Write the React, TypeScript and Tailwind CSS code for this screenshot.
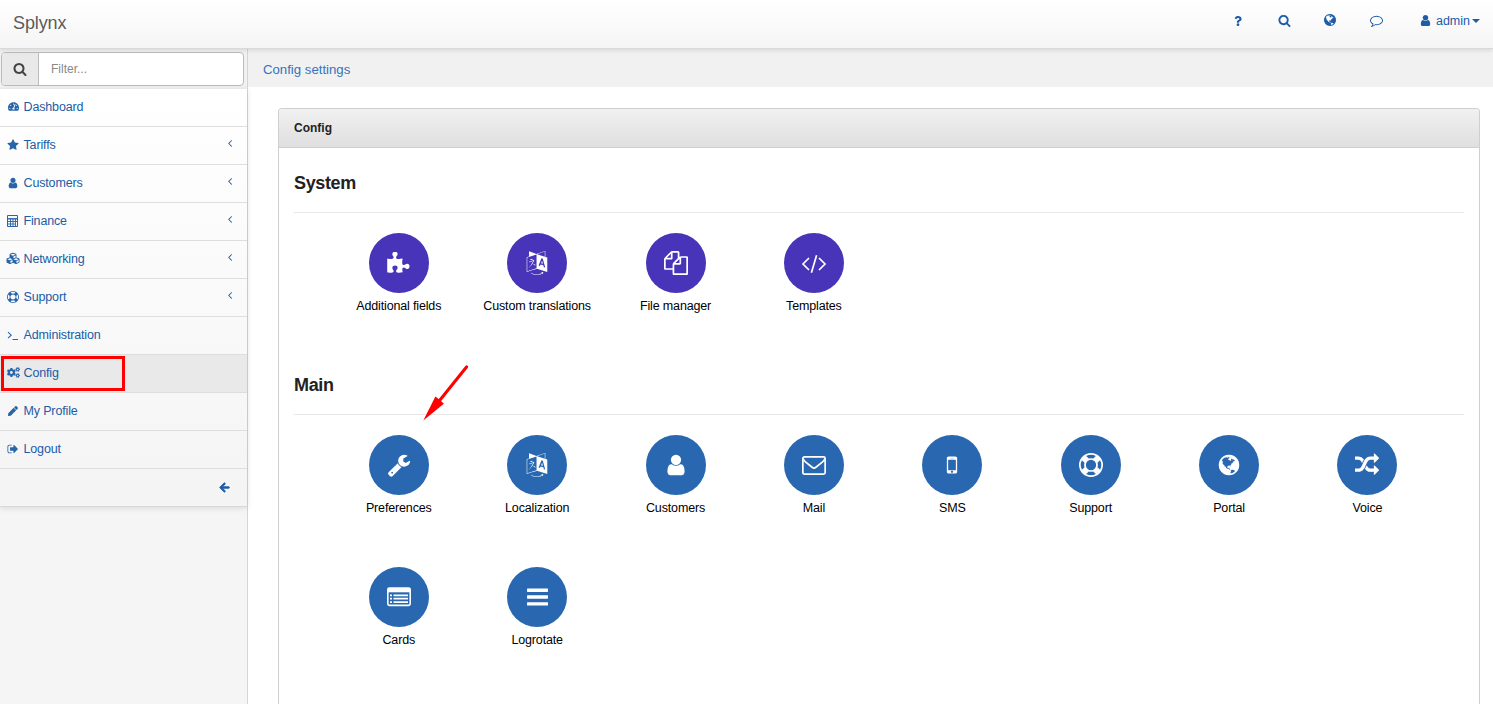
import React from "react";
import { FaArrowLeft, FaCogs, FaCubes, FaPen, FaQuestion, FaTachometerAlt } from "react-icons/fa";

const paths = {
  search:
    "M1216 832q0-185-131.5-316.5t-316.5-131.5-316.5 131.5-131.5 316.5 131.5 316.5 316.5 131.5 316.5-131.5 131.5-316.5zm512 832q0 52-38 90t-90 38q-54 0-90-38l-343-342q-179 124-399 124-143 0-273.5-55.5t-225-150-150-225-55.5-273.5 55.5-273.5 150-225 225-150 273.5-55.5 273.5 55.5 225 150 150 225 55.5 273.5q0 220-124 399l343 343q37 37 37 90z",
  user: "M1536 1399q0 109-62.5 187t-150.5 78h-854q-88 0-150.5-78t-62.5-187q0-85 8.5-160.5t31.5-152 58.5-131 94-89 134.5-34.5q131 128 313 128t313-128q76 0 134.5 34.5t94 89 58.5 131 31.5 152 8.5 160.5zm-256-887q0 159-112.5 271.5t-271.5 112.5-271.5-112.5-112.5-271.5 112.5-271.5 271.5-112.5 271.5 112.5 112.5 271.5z",
  star: "M1728 647q0 22-26 48l-363 354 86 500q1 7 1 20 0 21-10.5 35.5t-30.5 14.5q-19 0-40-12l-449-236-449 236q-22 12-40 12-21 0-31.5-14.5t-10.5-35.5q0-6 2-20l86-500-364-354q-25-27-25-48 0-37 56-46l502-73 225-455q19-41 49-41t49 41l225 455 502 73q56 9 56 46z",
  puzzle:
    "M1755 1079q0 81-44.5 135t-123.5 54q-41 0-77.5-17.5t-59-38-56.5-38-71-17.5q-110 0-110 124 0 39 16 115t15 115v5q-22 0-33 1-34 3-97.5 11.5t-115.5 13.5-98 5q-61 0-103-26.5t-42-83.5q0-37 17.5-71t38-56.5 38-59 17.5-77.5q0-79-54-123.5t-135-44.5q-84 0-143 45.5t-59 127.5q0 43 15 83t33.5 64.5 33.5 53 15 50.5q0 45-46 89-37 35-117 35-95 0-245-24-9-2-27.5-4t-27.5-4l-13-2q-1 0-3-1-2 0-2-1v-1024q2 1 17.5 3.5t34 5 21.5 3.5q150 24 245 24 80 0 117-35 46-44 46-89 0-22-15-50.5t-33.5-53-33.5-64.5-15-83q0-82 59-127.5t144-45.5q80 0 134 44.5t54 123.5q0 41-17.5 77.5t-38 59-38 56.5-17.5 71q0 57 42 83.5t103 26.5q64 0 180-15t163-17v2q-1 2-3.5 17.5t-5 34-3.5 21.5q-24 150-24 245 0 80 35 117 44 46 89 46 22 0 50.5-15t53-33.5 64.5-33.5 83-15q82 0 127.5 59t45.5 143z",
  wrench:
    "M448 1472q0-26-19-45t-45-19-45 19-19 45 19 45 45 19 45-19 19-45zm644-420l-682 682q-37 37-90 37-52 0-91-37l-106-108q-38-36-38-90 0-53 38-91l681-681q39 98 114.5 173.5t173.5 114.5zm634-435q0 39-23 106-47 134-164.5 217.5t-258.5 83.5q-185 0-316.5-131.5t-131.5-316.5 131.5-316.5 316.5-131.5q58 0 121.5 16.5t107.5 46.5q16 11 16 28t-16 28l-293 169v224l193 107q5-3 79-48.5t135.5-81 70.5-35.5q15 0 23.5 10t8.5 25z",
  files:
    "M1696 384q40 0 68 28t28 68v1216q0 40-28 68t-68 28h-960q-40 0-68-28t-28-68v-288h-544q-40 0-68-28t-28-68v-672q0-40 20-88t48-76l408-408q28-28 76-48t88-20h416q40 0 68 28t28 68v328q68-40 128-40h416zm-544 213l-299 299h299v-299zm-640-384l-299 299h299v-299zm196 647l316-316v-416h-384v416q0 40-28 68t-68 28h-416v640h512v-256q0-40 20-88t48-76zm956 804v-1152h-384v416q0 40-28 68t-68 28h-416v640h896z",
  random:
    "M666 481q-60 92-137 273-22-45-37-72.5t-40.5-63.5-51-56.5-63-35-81.5-14.5h-224q-14 0-23-9t-9-23v-192q0-14 9-23t23-9h224q250 0 410 225zm1126 799q0 14-9 23l-320 320q-9 9-23 9-13 0-22.5-9.5t-9.5-22.5v-192q-32 0-85 .5t-81 1-73-1-71-5-64-10.5-63-18.5-58-28.5-59-40-55-53.5-56-69.5q59-93 136-273 22 45 37 72.5t40.5 63.5 51 56.5 63 35 81.5 14.5h256v-192q0-14 9-23t23-9q12 0 24 10l319 319q9 9 9 23zm0-896q0 14-9 23l-320 320q-9 9-23 9-13 0-22.5-9.5t-9.5-22.5v-192h-256q-48 0-87 15t-69 45-51 61.5-45 77.5q-32 62-78 171-29 66-49.5 111t-54 105-64 100-74 83-90 68.5-106.5 42-128 16.5h-224q-14 0-23-9t-9-23v-192q0-14 9-23t23-9h224q48 0 87-15t69-45 51-61.5 45-77.5q32-62 78-171 29-66 49.5-111t54-105 64-100 74-83 90-68.5 106.5-42 128-16.5h256v-192q0-14 9-23t23-9q12 0 24 10l319 319q9 9 9 23z",
  ring: "M896 0q182 0 348 71t286 191 191 286 71 348-71 348-191 286-286 191-348 71-348-71-286-191-191-286-71-348 71-348 191-286 286-191 348-71zm0 128q-190 0-361 90l194 194q82-28 167-28t167 28l194-194q-171-90-361-90zm-678 1129l194-194q-28-82-28-167t28-167l-194-194q-90 171-90 361t90 361zm678 407q190 0 361-90l-194-194q-82 28-167 28t-167-28l-194 194q171 90 361 90zm0-384q159 0 271.5-112.5t112.5-271.5-112.5-271.5-271.5-112.5-271.5 112.5-112.5 271.5 112.5 271.5 271.5 112.5zm484-217l194 194q90-171 90-361t-90-361l-194 194q28 82 28 167t-28 167z",
  mobile:
    "M976 1408q0-33-23.5-56.5t-56.5-23.5-56.5 23.5-23.5 56.5 23.5 56.5 56.5 23.5 56.5-23.5 23.5-56.5zm208-160v-704q0-13-9.5-22.5t-22.5-9.5h-512q-13 0-22.5 9.5t-9.5 22.5v704q0 13 9.5 22.5t22.5 9.5h512q13 0 22.5-9.5t9.5-22.5zm-192-848q0-16-16-16h-160q-16 0-16 16t16 16h160q16 0 16-16zm288-16v1024q0 52-38 90t-90 38h-512q-52 0-90-38t-38-90v-1024q0-52 38-90t90-38h512q52 0 90 38t38 90z",
  comment:
    "M896 384q-204 0-381.5 69.5t-282 187.5-104.5 255q0 112 71.5 213.5t201.5 175.5l87 50-27 96q-24 91-70 172 152-63 275-171l43-38 57 6q69 8 130 8 204 0 381.5-69.5t282-187.5 104.5-255-104.5-255-282-187.5-381.5-69.5zm896 512q0 174-120 321.5t-326 233-450 85.5q-70 0-145-8-198 175-460 242-49 14-114 22h-5q-15 0-27-10.5t-16-27.5v-1q-3-4-.5-12t2-10 4.5-9.5l6-9 7-8.5 8-9q7-8 31-34.5t34.5-38 31-39.5 32.5-51 27-59 26-76q-157-89-247.5-220t-90.5-281q0-130 71-248.5t191-204.5 286-136.5 348-50.5 348 50.5 286 136.5 191 204.5 71 248.5z",
  signOut:
    "M704 1440q0 4 1 20t.5 26.5-3 23.5-10 19.5-20.5 6.5h-320q-119 0-203.5-84.5t-84.5-203.5v-704q0-119 84.5-203.5t203.5-84.5h320q13 0 22.5 9.5t9.5 22.5q0 4 1 20t.5 26.5-3 23.5-10 19.5-20.5 6.5h-320q-66 0-113 47t-47 113v704q0 66 47 113t113 47h312l11.5 1 11.5 3 8 5.5 7 9 2 13.5zm928-544q0 26-19 45l-544 544q-19 19-45 19t-45-19-19-45v-288h-448q-26 0-45-19t-19-45v-384q0-26 19-45t45-19h448v-288q0-26 19-45t45-19 45 19l544 544q19 19 19 45z",
  angleLeft:
    "M1203 544q0 13-10 23l-393 393 393 393q10 10 10 23t-10 23l-50 50q-10 10-23 10t-23-10l-466-466q-10-10-10-23t10-23l466-466q10-10 23-10t23 10l50 50q10 10 10 23z",
  language:
    "M782 1078q-1 3-12.5-.5t-31.5-11.5l-20-9q-44-20-87-49-7-5-41-31.5t-38-28.5q-67 103-134 181-81 95-105 110-4 2-19.5 4t-18.5 0q6-4 82-92 21-24 85.5-115t78.5-118q17-30 51-98.5t36-77.5q-8-1-110 33-8 2-27.5 7.5t-34.5 9.5-17 5q-2 2-2 10.5t-1 9.5q-5 10-31 15-23 7-47 0-18-4-28-21-4-6-5-23 6-2 24.5-5t29.5-6q58-16 105-32 100-35 102-35 10-2 43-19.5t44-21.5q9-3 21.5-8t14.5-5.5 6 .5q2 12-1 33 0 2-12.5 27t-26.5 53.5-17 33.5q-25 50-77 131l64 28q12 6 74.5 32t67.5 28q4 1 10.5 25.5t4.5 30.5zm-205-486q3 15-4 28-12 23-50 38-30 12-60 12-26-3-49-26-14-15-18-41l1-3q3 3 19.5 5t26.5 0 58-16q36-12 55-14 17 0 21 17zm698 129l63 227-139-42zm-1108 800l694-232v-1032l-694 233v1031zm1241-317l102 31-181-657-100-31-216 536 102 31 45-110 211 65zm-503-962l573 184v-380zm311 1323l158 13-54 160-40-66q-130 83-276 108-58 12-91 12h-84q-79 0-199.5-39t-183.5-85q-8-7-8-16 0-8 5-13.5t13-5.5q4 0 18 7.5t30.5 16.5 20.5 11q73 37 159.5 61.5t157.5 24.5q95 0 167-14.5t157-50.5q15-7 30.5-15.5t34-19 28.5-16.5zm448-1079v1079l-774-246q-14 6-375 127.5t-368 121.5q-13 0-18-13 0-1-1-3v-1078q3-9 4-10 5-6 20-11 107-36 149-50v-384l558 198q2 0 160.5-55t316-108.5 161.5-53.5q20 0 20 21v418z",
  globe:
    "M896 128q209 0 385.5 103t279.5 279.5 103 385.5-103 385.5-279.5 279.5-385.5 103-385.5-103-279.5-279.5-103-385.5 103-385.5 279.5-279.5 385.5-103zm274 521q-2 1-9.5 9.5t-13.5 9.5q2 0 4.5-5t5-11 3.5-7q6-7 22-15 14-6 52-12 34-8 51 11-2-2 9.5-13t14.5-12q3-2 15-4.5t15-7.5l2-22q-12 1-17.5-7t-6.5-21q0 2-6 8 0-7-4.5-8t-11.5 1-9 1q-10-3-15-7.5t-8-16.5-4-15q-2-5-9.5-11t-9.5-10q-1-2-2.5-5.5t-3-6.5-4-5.5-5.5-2.5-7 5-7.5 10-4.5 5q-3-2-6-1.5t-4.5 1-4.5 3-5 3.5q-3 2-8.5 3t-8.5 2q15-5-1-11-10-4-16-3 9-4 7.5-12t-8.5-14h5q-1-4-8.5-8.5t-17.5-8.5-13-6q-8-5-34-9.5t-33-.5q-5 6-4.5 10.5t4 14 3.5 12.5q1 6-5.5 13t-6.5 12q0 7 14 15.5t10 21.5q-3 8-16 16t-16 12q-5 8-1.5 18.5t10.5 16.5q2 2 1.5 4t-3.5 4.5-5.5 4-6.5 3.5l-3 2q-11 5-20.5-6t-13.5-26q-7-25-16-30-23-8-29 1-5-13-41-26-25-9-58-4 6-1 0-15-7-15-19-12 3-6 4-17.5t1-13.5q3-13 12-23 1-1 7-8.5t9.5-13.5.5-6q35 4 50-11 5-5 11.5-17t10.5-17q9-6 14-5.5t14.5 5.5 14.5 5q14 1 15.5-11t-7.5-20q12 1 3-17-4-7-8-9-12-4-27 5-8 4 2 8-1-1-9.5 10.5t-16.5 17.5-16-5q-1-1-5.5-13.5t-9.5-13.5q-8 0-16 15 3-8-11-15t-24-8q19-12-8-27-7-4-20.5-5t-19.5 4q-5 7-5.5 11.5t5 8 10.5 5.5 11.5 4 8.5 3q14 10 8 14-2 1-8.5 3.5t-11.5 4.5-6 4q-3 4 0 14t-2 14q-5-5-9-17.5t-7-16.5q7 9-25 6l-10-1q-4 0-16 2t-20.5 1-13.5-8q-4-8 0-20 1-4 4-2-4-3-11-9.5t-10-8.5q-46 15-94 41 6 1 12-1 5-2 13-6.5t10-5.5q34-14 42-7l5-5q14 16 20 25-7-4-30-1-20 6-22 12 7 12 5 18-4-3-11.5-10t-14.5-11-15-5q-16 0-22 1-146 80-235 222 7 7 12 8 4 1 5 9t2.5 11 11.5-3q9 8 3 19 1-1 44 27 19 17 21 21 3 11-10 18-1-2-9-9t-9-4q-3 5 .5 18.5t10.5 12.5q-7 0-9.5 16t-2.5 35.5-1 23.5l2 1q-3 12 5.5 34.5t21.5 19.5q-13 3 20 43 6 8 8 9 3 2 12 7.5t15 10 10 10.5q4 5 10 22.5t14 23.5q-2 6 9.5 20t10.5 23q-1 0-2.5 1t-2.5 1q3 7 15.5 14t15.5 13q1 3 2 10t3 11 8 2q2-20-24-62-15-25-17-29-3-5-5.5-15.5t-4.5-14.5q2 0 6 1.5t8.5 3.5 7.5 4 2 3q-3 7 2 17.5t12 18.5 17 19 12 13q6 6 14 19.5t0 13.5q9 0 20 10t17 20q5 8 8 26t5 24q2 7 8.5 13.5t12.5 9.5l16 8 13 7q5 2 18.5 10.5t21.5 11.5q10 4 16 4t14.5-2.5 13.5-3.5q15-2 29 15t21 21q36 19 55 11-2 1 .5 7.5t8 15.5 9 14.5 5.5 8.5q5 6 18 15t18 15q6-4 7-9-3 8 7 20t18 10q14-3 14-32-31 15-49-18 0-1-2.5-5.5t-4-8.5-2.5-8.5 0-7.5 5-3q9 0 10-3.5t-2-12.5-4-13q-1-8-11-20t-12-15q-5 9-16 8t-16-9q0 1-1.5 5.5t-1.5 6.5q-13 0-15-1 1-3 2.5-17.5t3.5-22.5q1-4 5.5-12t7.5-14.5 4-12.5-4.5-9.5-17.5-2.5q-19 1-26 20-1 3-3 10.5t-5 11.5-9 7q-7 3-24 2t-24-5q-13-8-22.5-29t-9.5-37q0-10 2.5-26.5t3-25-5.5-24.5q3-2 9-9.5t10-10.5q2-1 4.5-1.5t4.5 0 4-1.5 3-6q-1-1-4-3-3-3-4-3 7 3 28.5-1.5t27.5 1.5q15 11 22-2 0-1-2.5-9.5t-.5-13.5q5 27 29 9 3 3 15.5 5t17.5 5q3 2 7 5.5t5.5 4.5 5-.5 8.5-6.5q10 14 12 24 11 40 19 44 7 3 11 2t4.5-9.5 0-14-1.5-12.5l-1-8v-18l-1-8q-15-3-18.5-12t1.5-18.5 15-18.5q1-1 8-3.5t15.5-6.5 12.5-8q21-19 15-35 7 0 11-9-1 0-5-3t-7.5-5-4.5-2q9-5 2-16 5-3 7.5-11t7.5-10q9 12 21 2 8-8 1-16 5-7 20.5-10.5t18.5-9.5q7 2 8-2t1-12 3-12q4-5 15-9t13-5l17-11q3-4 0-4 18 2 31-11 10-11-6-20 3-6-3-9.5t-15-5.5q3-1 11.5-.5t10.5-1.5q15-10-7-16-17-5-43 12zm-163 877q206-36 351-189-3-3-12.5-4.5t-12.5-3.5q-18-7-24-8 1-7-2.5-13t-8-9-12.5-8-11-7q-2-2-7-6t-7-5.5-7.5-4.5-8.5-2-10 1l-3 1q-3 1-5.5 2.5t-5.5 3-4 3 0 2.5q-21-17-36-22-5-1-11-5.5t-10.5-7-10-1.5-11.5 7q-5 5-6 15t-2 13q-7-5 0-17.5t2-18.5q-3-6-10.5-4.5t-12 4.5-11.5 8.5-9 6.5-8.5 5.5-8.5 7.5q-3 4-6 12t-5 11q-2-4-11.5-6.5t-9.5-5.5q2 10 4 35t5 38q7 31-12 48-27 25-29 40-4 22 12 26 0 7-8 20.5t-7 21.5q0 6 2 16z",
};

type GlyphName = keyof typeof paths;

function Glyph({ name, className = "" }: { name: GlyphName; className?: string }) {
  return (
    <svg viewBox="0 0 1792 1792" fill="currentColor" className={`shrink-0 ${className}`}>
      <path d={paths[name]} />
    </svg>
  );
}

const Calculator = () => (
  <svg viewBox="0 0 11 12" className="mr-px h-3 w-[11px]" fill="none" stroke="currentColor">
    <path d="M.5 .5h10v11h-10z" />
    <path d="M1 3.8h9" strokeWidth="1.4" />
    <path d="M1 6.5h9M1 9h7M3.5 4v7.5M6 4v7.5M8.5 4v7.5" strokeWidth=".9" />
  </svg>
);

const Terminal = () => (
  <svg viewBox="0 0 12 10" className="mt-[3px] h-[10px] w-3" fill="none" stroke="currentColor">
    <path d="M1 1.2l3.2 3L1 7.2M5.5 8.5h5.5" strokeWidth="1.1" />
  </svg>
);

const Code = () => (
  <svg viewBox="0 0 26 24" className="mt-[2px] h-6 w-[26px]" fill="none" stroke="currentColor" strokeWidth="1.7">
    <path d="M8 6L2 12l6 6M18 6l6 6-6 6M15.6 3.2L10.4 20.8" />
  </svg>
);

const Envelope = () => (
  <svg viewBox="0 0 24 24" className="mt-[2px] h-6 w-6" fill="none" stroke="currentColor" strokeWidth="1.7">
    <rect x=".85" y="2.85" width="22.3" height="17.3" rx="1.6" />
    <path d="M1 4.6q1 2.2 3 3.8l5.8 4.6q1.4 1.2 2.2 1.2t2.2-1.2L20 8.4q2-1.6 3-3.8" />
  </svg>
);

const Cards = () => (
  <svg viewBox="0 0 24 24" className="h-6 w-6" fill="none" stroke="currentColor">
    <rect x=".8" y="3" width="22.4" height="17.4" rx="1.6" strokeWidth="1.6" />
    <path d="M.8 5.2h22.4" strokeWidth="4.2" />
    <path d="M3 10.3h2M6.5 10.3h14.5M3 13.7h2M6.5 13.7h14.5M3 17.1h2M6.5 17.1h14.5" strokeWidth="1.7" />
  </svg>
);

const Bars = () => (
  <svg viewBox="0 0 21 18" className="h-[18px] w-[21px]" fill="currentColor">
    <rect y=".5" width="21" height="3.4" rx=".6" />
    <rect y="7.3" width="21" height="3.4" rx=".6" />
    <rect y="14.2" width="21" height="3.4" rx=".6" />
  </svg>
);

const nav: { label: string; icon: React.ReactNode; sub?: boolean; active?: boolean }[] = [
  { label: "Dashboard", icon: <FaTachometerAlt className="h-[11px] w-[11px]" /> },
  { label: "Tariffs", icon: <Glyph name="star" className="h-3 w-3" />, sub: true },
  { label: "Customers", icon: <Glyph name="user" className="h-3 w-3" />, sub: true },
  { label: "Finance", icon: <Calculator />, sub: true },
  { label: "Networking", icon: <FaCubes className="h-[13px] w-[14px]" />, sub: true },
  { label: "Support", icon: <Glyph name="ring" className="h-3 w-3" />, sub: true },
  { label: "Administration", icon: <Terminal /> },
  { label: "Config", icon: <FaCogs className="h-[13px] w-[13px]" />, active: true },
  { label: "My Profile", icon: <FaPen className="h-[10px] w-[10px]" /> },
  { label: "Logout", icon: <Glyph name="signOut" className="h-3 w-3" /> },
];

const big = "h-6 w-6";
const systemTiles = [
  { label: "Additional fields", icon: <Glyph name="puzzle" className="mr-[2px] mt-px h-6 w-6" /> },
  { label: "Custom translations", icon: <Glyph name="language" className={big} /> },
  { label: "File manager", icon: <Glyph name="files" className={big} /> },
  { label: "Templates", icon: <Code /> },
];
const mainTiles = [
  { label: "Preferences", icon: <Glyph name="wrench" className={big} /> },
  { label: "Localization", icon: <Glyph name="language" className={big} /> },
  { label: "Customers", icon: <Glyph name="user" className={big} /> },
  { label: "Mail", icon: <Envelope /> },
  { label: "SMS", icon: <Glyph name="mobile" className={big} /> },
  { label: "Support", icon: <Glyph name="ring" className={big} /> },
  { label: "Portal", icon: <Glyph name="globe" className={big} /> },
  { label: "Voice", icon: <Glyph name="random" className={big} /> },
  { label: "Cards", icon: <Cards /> },
  { label: "Logrotate", icon: <Bars /> },
];

function Section({
  title,
  tiles,
  color,
}: {
  title: string;
  tiles: { label: string; icon: React.ReactNode }[];
  color: string;
}) {
  return (
    <section>
      <h3 className="h-5 text-[18px] leading-5 font-bold tracking-[-0.35px] text-[#222]">{title}</h3>
      <div className="mt-[19px] h-px bg-[#e8e8e8]" />
      <div className="mt-5 ml-[35.6px] grid w-[1107px] grid-cols-8">
        {tiles.map((t) => (
          <div key={t.label} className="flex h-[132px] flex-col items-center">
            <div className={`flex h-[60px] w-[60px] items-center justify-center rounded-full text-white ${color}`}>
              {t.icon}
            </div>
            <span className="mt-1 text-[12.5px] leading-[18px] tracking-[-0.15px] whitespace-nowrap text-black">
              {t.label}
            </span>
          </div>
        ))}
      </div>
    </section>
  );
}

export default function App() {
  return (
    <div className="flex h-[704px] flex-col overflow-hidden bg-white font-['Liberation_Sans',Arial,sans-serif] text-[12.5px] tracking-[-0.15px] text-[#205ca6]">
      <header className="relative z-10 flex h-[49px] shrink-0 justify-between border-b border-[#d9d9d9] bg-linear-to-b from-white to-[#f5f5f5] shadow-[0_1px_5px_rgba(0,0,0,0.12)]">
        <span className="mt-[11px] ml-[13px] text-[18px] leading-6 tracking-[-0.1px] text-[#5b5b5b]">Splynx</span>
        <div className="mr-[13px] flex h-[41px] items-center">
          <FaQuestion className="mr-9 h-[10px] w-2" />
          <Glyph name="search" className="mr-8 h-[13px] w-[13px]" />
          <Glyph name="globe" className="mr-[33px] mb-px h-[14px] w-[14px]" />
          <Glyph name="comment" className="mr-9 h-[13px] w-[13px]" />
          <Glyph name="user" className="mr-1 h-[13px] w-[13px]" />
          <span className="pt-px tracking-normal">admin</span>
          <svg viewBox="0 0 8 4" className="ml-[2px] h-1 w-2" fill="currentColor">
            <path d="M0 0h8L4 4z" />
          </svg>
        </div>
      </header>

      <div className="flex min-h-0 flex-1">
        <aside className="w-[248px] shrink-0 border-r border-[#d5d5d5] bg-[#f5f5f5]">
          <div className="h-10 bg-[#f1f1f1] pt-[3px] pl-px">
            <div className="flex h-[34px] w-[243px] overflow-hidden rounded border border-[#bcbcbc] bg-white">
              <div className="flex w-[37px] items-center justify-center border-r border-[#bcbcbc] bg-[#e9e9e9] pb-px text-[#444]">
                <Glyph name="search" className="h-[14px] w-[14px]" />
              </div>
              <span className="pl-3 text-[12px] leading-[32px] tracking-normal text-[#888]">Filter...</span>
            </div>
          </div>
          <nav className="border-b border-[#d9d9d9] bg-linear-to-b from-white to-[#f4f4f4] shadow-[0_1px_6px_rgba(0,0,0,0.12)]">
            {nav.map((n) => (
              <div
                key={n.label}
                className={`relative flex h-[38px] items-center border-b border-[#dedede] pl-[6px] ${n.active ? "bg-[#e9e9e9]" : ""}`}
              >
                <span className="flex w-[14px] justify-center pb-[2px] text-[#2864a8]">{n.icon}</span>
                <span className="ml-[3.5px] h-[38px] leading-[37px]">{n.label}</span>
                {n.sub && <Glyph name="angleLeft" className="mr-[11px] mb-[5px] ml-auto h-3 w-3" />}
                {n.active && <div className="absolute top-[1px] left-px h-[35px] w-[124px] border-[3px] border-[#f00]" />}
              </div>
            ))}
            <div className="flex h-[37px] items-center justify-end pr-[17px] pb-px">
              <FaArrowLeft className="h-[11px] w-[11px] overflow-visible stroke-[#205ca6] stroke-[36px]" />
            </div>
          </nav>
        </aside>

        <main className="flex min-w-0 flex-1 flex-col">
          <div className="h-[38px] shrink-0 bg-[#f1f1f1] pl-[15px] text-[13.2px] leading-[41px] tracking-normal text-[#3573bd]">
            Config settings
          </div>
          <div className="mt-[21px] mr-[13px] ml-[30px] flex-1 rounded-t border border-b-0 border-[#cfcfcf]">
            <div className="h-[39px] rounded-t-[3px] border-b border-[#cfcfcf] bg-linear-to-b from-[#f1f1f1] to-[#dfdfdf] pl-[15px] text-[12px] leading-[38px] font-bold tracking-normal text-[#222]">
              Config
            </div>
            <div className="relative px-[15px] pt-[25px]">
              <Section title="System" tiles={systemTiles} color="bg-[#4834b8]" />
              <div className="h-[10px]" />
              <Section title="Main" tiles={mainTiles} color="bg-[#2968b0]" />
              <svg viewBox="0 0 48 58" className="absolute top-[215px] left-[143px] h-[58px] w-12" fill="#f00">
                <path d="M44.7 3.8L18 37" stroke="#f00" strokeWidth="3" strokeLinecap="round" />
                <path d="M1.3 57.5L13.4 33.6l4.3 3.2 4.200 3.900z" />
              </svg>
            </div>
          </div>
        </main>
      </div>
    </div>
  );
}
